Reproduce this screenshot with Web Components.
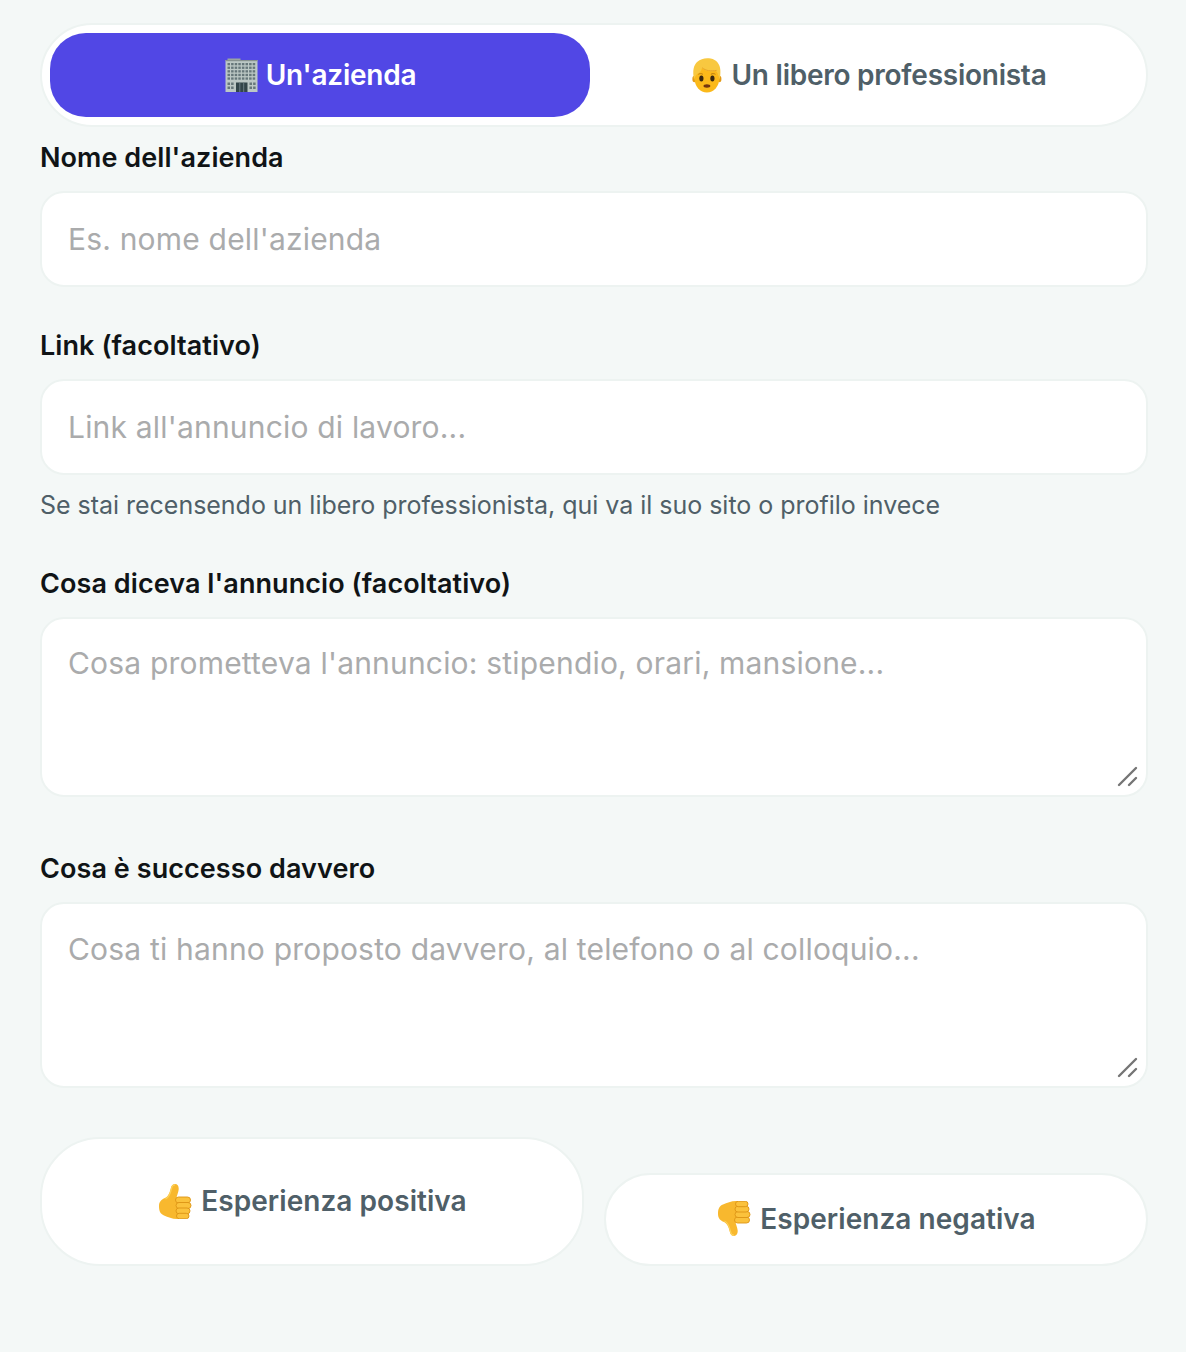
<!DOCTYPE html>
<html lang="it">
<head>
<meta charset="utf-8">
<title>Recensione</title>
<style>
  html, body { margin: 0; background: #f4f8f7; }
  body { font-family: 'Inter', 'Liberation Sans', sans-serif; }
</style>
</head>
<body>
<review-form></review-form>

<script>
const THUMB = `
      <path d="M2 23C2 18.500 4.500 16.500 8 15 11.500 13.300 12.800 9.500 13.800 5.200 14.400 2.300 16 1 18 1c2.800 0 4.100 2.800 3.600 6-.4 2.600-1.400 5-2.100 7.500L24 24l-2 11.800c-6 .6-10.500-1.600-15-3.400C3.500 31 2 28.500 2 23z" fill="#f8b82e"/>
      <path d="M8.500 16C12 14.500 13.500 10 14.500 5.500 15 3 16.200 1.800 18 1.800" stroke="#fcd15a" stroke-width="1.200" fill="none"/>
      <g fill="#fbc23c" stroke="#dd9415" stroke-width=".9">
        <rect x="18.500" y="14" width="15" height="6" rx="3"/>
        <rect x="19" y="19.500" width="15" height="6" rx="3"/>
        <rect x="19" y="25" width="14" height="5.800" rx="2.900"/>
        <rect x="19.500" y="30.300" width="12.500" height="5.400" rx="2.700"/>
      </g>`;

const ICONS = {
  building: `<svg width="36" height="36" viewBox="1.5 0 36 36" aria-hidden="true">
      <rect x="5" y="1.500" width="13" height="2" fill="#9aa5a2"/>
      <rect x="3" y="3" width="32" height="32" fill="#bcc8c5"/>
      <rect x="3" y="3" width="32" height="1.200" fill="#87928f"/>
      <g fill="#66777a">
        ${[6, 9.6, 13.2, 16.8, 20.4].map(y => [5, 8.600, 12.200, 15.800, 19.400, 23, 26.600, 30.200].map(x =>
          `<rect x="${x}" y="${y}" width="2.500" height="2.300"/>`).join('')).join('')}
        ${[25.500, 29.500].map(y => [5, 8.600, 27, 30.600].map(x =>
          `<rect x="${x}" y="${y}" width="2.500" height="2.500"/>`).join('')).join('')}
      </g>
      <rect x="13.500" y="25.500" width="11.500" height="9.500" fill="#33464a"/>
      <path d="M17.300 25.500v9.500M21.200 25.500v9.500" stroke="#73858a" stroke-width=".9"/>
    </svg>`,
  person: `<svg width="36" height="36" viewBox="0 0 36 36" aria-hidden="true">
      <g transform="translate(-0.2 0) scale(.95 1)">
      <ellipse cx="5" cy="22" rx="2.300" ry="3.200" fill="#e49a16"/>
      <ellipse cx="31" cy="22" rx="2.300" ry="3.200" fill="#e49a16"/>
      <ellipse cx="18" cy="21.500" rx="13" ry="14" fill="#fbb91a"/>
      <path d="M4.600 23C2.500 14 4 8 8 4.800 11.500 1.500 17 .5 22 1.500c6 1.200 10 5.500 10.200 12 .1 3.500-.2 6.500-.8 9.500-.6-3.500-1.800-6.800-3.800-9-5.500 1-11 .2-14.800-2.800-.6 3-2.300 4.500-4.800 5.500-1.600 1.300-2.700 3.400-3.400 6.300z" fill="#f8c840"/>
      <path d="M13 10.800c4 3 9 3.600 15.200 2.600" stroke="#e6a226" stroke-width="1" fill="none"/>
      <ellipse cx="12.200" cy="21.500" rx="2.200" ry="2.900" fill="#3a2810"/>
      <ellipse cx="23.800" cy="21.500" rx="2.200" ry="2.900" fill="#3a2810"/>
      <path d="M9 17.300c1.500-.9 3.400-.9 4.800 0M22.200 17.300c1.500-.9 3.400-.9 4.800 0" stroke="#b9790f" stroke-width="1" fill="none"/>
      <ellipse cx="18" cy="29" rx="3.600" ry="1.700" fill="#74360f"/>
      </g>
    </svg>`,
  thumbUp: `<svg width="36" height="36" viewBox="0 0 36 36" aria-hidden="true">${THUMB}
    </svg>`,
  thumbDown: `<svg width="36" height="36" viewBox="0 0 36 36" aria-hidden="true">
      <g transform="translate(0 36) scale(1 -1)">${THUMB}
      </g>
    </svg>`
};

class SegmentTab extends HTMLElement {
  connectedCallback() {
    this.attachShadow({ mode: 'open' });
    this.shadowRoot.innerHTML = `
      <style>
        :host {
          display: flex;
          flex: 1 1 0;
          align-items: center;
          justify-content: center;
          gap: 6px;
          height: 84px;
          border-radius: 36px;
          font-size: 28px;
          font-weight: 600;
          letter-spacing: -0.25px;
          color: #4f5f68;
          cursor: pointer;
        }
        :host([active]) { background: #5147e5; color: #fff; }
        .icon { display: flex; }
      </style>
      <span class="icon">${ICONS[this.getAttribute('icon')]}</span>
      <slot></slot>
    `;
  }
}

class SegmentControl extends HTMLElement {
  connectedCallback() {
    this.attachShadow({ mode: 'open' });
    this.shadowRoot.innerHTML = `
      <style>
        :host {
          display: flex;
          gap: 8px;
          padding: 8px;
          background: #fff;
          border: 2px solid #edf3f1;
          border-radius: 52px;
        }
      </style>
      <slot></slot>
    `;
  }
}

class FormField extends HTMLElement {
  connectedCallback() {
    this.attachShadow({ mode: 'open' });
    const hint = this.getAttribute('hint');
    const height = this.getAttribute('height');
    const pad = this.getAttribute('pad') || 26;
    this.shadowRoot.innerHTML = `
      <style>
        :host { display: block; }
        .label {
          font-size: 27px;
          line-height: 34px;
          font-weight: 600;
          letter-spacing: 0.07px;
          color: #101416;
          margin-bottom: 16px;
        }
        .box {
          position: relative;
          box-sizing: border-box;
          height: ${height || 96}px;
          padding: ${height ? pad + 'px' : '0'} 26px 0;
          display: flex;
          align-items: ${height ? 'flex-start' : 'center'};
          background: #fff;
          border: 2px solid #edf3f1;
          border-radius: 24px;
          font-size: 30px;
          line-height: 36px;
          letter-spacing: 0.19px;
          color: #aaabac;
        }
        .grip { position: absolute; right: 7px; bottom: 8px; display: ${height ? 'block' : 'none'}; }
        .hint {
          margin-top: 14px;
          font-size: 25px;
          line-height: 32px;
          letter-spacing: -0.025px;
          color: #4f5f68;
        }
      </style>
      <div class="label"><slot></slot></div>
      <div class="box">
        <span>${this.getAttribute('placeholder')}</span>
        <svg class="grip" width="22" height="22" viewBox="0 0 22 22" aria-hidden="true">
          <path d="M2 20 19 3M12 20l7-7" stroke="#757575" stroke-width="2.400" stroke-linecap="round" fill="none"/>
        </svg>
      </div>
      ${hint ? `<div class="hint">${hint}</div>` : ''}
    `;
  }
}

class VoteButton extends HTMLElement {
  connectedCallback() {
    this.attachShadow({ mode: 'open' });
    this.shadowRoot.innerHTML = `
      <style>
        :host {
          display: flex;
          flex: 1 1 0;
          box-sizing: border-box;
          align-items: center;
          justify-content: center;
          gap: 8px;
          padding-bottom: 2px;
          background: #fff;
          border: 2px solid #edf3f1;
          border-radius: 60px;
          font-size: 28px;
          font-weight: 600;
          letter-spacing: 0.05px;
          color: #4f5f68;
          cursor: pointer;
        }
        :host([tall]) { height: 129px; }
        :host(:not([tall])) { height: 93px; }
        .icon { display: flex; }
      </style>
      <span class="icon">${ICONS[this.getAttribute('icon')]}</span>
      <slot></slot>
    `;
  }
}

class ReviewForm extends HTMLElement {
  connectedCallback() {
    this.attachShadow({ mode: 'open' });
    this.shadowRoot.innerHTML = `
      <style>
        :host {
          display: flex;
          flex-direction: column;
          box-sizing: border-box;
          min-height: 1352px;
          padding: 23px 38px 86px 40px;
        }
        .fields { display: flex; flex-direction: column; margin-top: 14px; }
        .first { margin-bottom: 42px; }
        .second { margin-bottom: 46px; }
        .third { margin-bottom: 55px; }
        .votes { display: flex; align-items: flex-end; gap: 20px; margin-top: 49px; }
      </style>
      <segment-control>
        <segment-tab icon="building" active>Un'azienda</segment-tab>
        <segment-tab icon="person">Un libero professionista</segment-tab>
      </segment-control>
      <div class="fields">
        <form-field class="first" placeholder="Es. nome dell'azienda">Nome dell'azienda</form-field>
        <form-field class="second" placeholder="Link all'annuncio di lavoro..." hint="Se stai recensendo un libero professionista, qui va il suo sito o profilo invece">Link (facoltativo)</form-field>
        <form-field class="third" height="180" placeholder="Cosa prometteva l'annuncio: stipendio, orari, mansione...">Cosa diceva l'annuncio (facoltativo)</form-field>
        <form-field height="186" pad="27" placeholder="Cosa ti hanno proposto davvero, al telefono o al colloquio...">Cosa è successo davvero</form-field>
      </div>
      <div class="votes">
        <vote-button icon="thumbUp" tall>Esperienza positiva</vote-button>
        <vote-button icon="thumbDown">Esperienza negativa</vote-button>
      </div>
    `;
  }
}

customElements.define('segment-tab', SegmentTab);
customElements.define('segment-control', SegmentControl);
customElements.define('form-field', FormField);
customElements.define('vote-button', VoteButton);
customElements.define('review-form', ReviewForm);
</script>
</body>
</html>
